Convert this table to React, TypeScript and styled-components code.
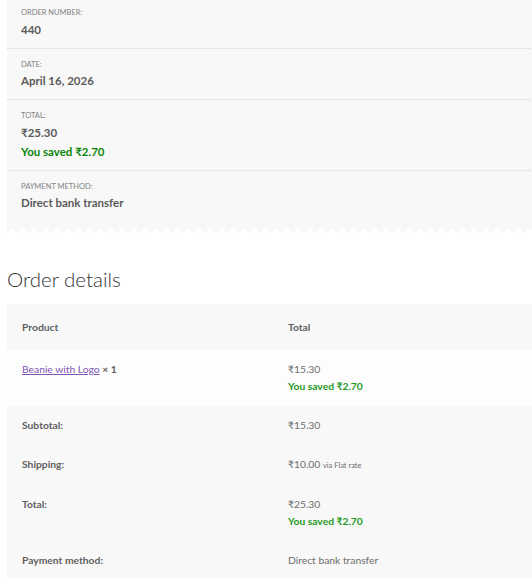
import React from "react";
import styled, { createGlobalStyle } from "styled-components";

const GlobalStyle = createGlobalStyle`
  html, body {
    margin: 0;
    padding: 0;
    overflow: hidden;
    background: #ffffff;
  }
  body {
    font-family: Lato, "Liberation Sans", "DejaVu Sans", sans-serif;
    color: #6d6d6d;
    -webkit-font-smoothing: antialiased;
  }
`;

const Page = styled.div`
  margin-left: 7px;
  width: 532px;
`;

const Overview = styled.div`
  margin-top: -3px;
`;

const OverviewList = styled.ul`
  list-style: none;
  margin: 0;
  padding: 0;
  background: #f8f8f8;
`;

const ZigzagEdge = styled.div`
  height: 5.5px;
  background-image: linear-gradient(135deg, #f8f8f8 25%, transparent 25%),
    linear-gradient(225deg, #f8f8f8 25%, transparent 25%);
  background-size: 11px 11px;
  background-repeat: repeat-x;
`;

const OverviewItem = styled.li<{ $last?: boolean }>`
  padding: 10px 14px ${(p) => (p.$last ? "16px" : "9px")};
  border-bottom: ${(p) => (p.$last ? "none" : "1px dotted #d6d6d6")};
`;

const ItemLabel = styled.span`
  display: block;
  font-size: 7.5px;
  line-height: 11px;
  text-transform: uppercase;
  color: #808080;
`;

const ItemValue = styled.strong`
  display: block;
  margin-top: 1.5px;
  font-size: 11.5px;
  line-height: 19px;
  font-weight: 700;
  color: #5a5a5a;
`;

const SavedLine = styled.strong<{ $compact?: boolean }>`
  display: block;
  font-size: ${(p) => (p.$compact ? "10.3px" : "11.5px")};
  line-height: ${(p) => (p.$compact ? "17px" : "19px")};
  font-weight: 700;
  color: ${(p) => (p.$compact ? "#239a23" : "#0a850a")};
`;

const Heading = styled.h2`
  margin: 32.5px 0 0;
  height: 38px;
  font-size: 20.5px;
  line-height: 26px;
  font-weight: 300;
  color: #333333;
`;

const Table = styled.table`
  width: 532px;
  table-layout: fixed;
  border-collapse: collapse;
  border-spacing: 0;
  font-size: 10.3px;
  line-height: 17px;
`;

const HeadCell = styled.th`
  padding: 14.5px 15px;
  text-align: left;
  font-weight: 700;
  color: #5f5f5f;
  background: #f8f8f8;
`;

const BodyRow = styled.tr<{ $tone: "light" | "grey" }>`
  background: ${(p) => (p.$tone === "light" ? "#fdfdfd" : "#f8f8f8")};
`;

const RowHead = styled.th`
  padding: 11px 15px;
  text-align: left;
  vertical-align: top;
  font-weight: 700;
  color: #5f5f5f;
`;

const Cell = styled.td`
  padding: 11px 15px;
  text-align: left;
  vertical-align: top;
  color: #6d6d6d;
`;

const ProductLink = styled.a`
  color: #7f54b3;
  text-decoration: underline;
`;

const Qty = styled.strong`
  font-weight: 700;
  color: #5f5f5f;
`;

const Amount = styled.span`
  display: block;
`;

const ShippedVia = styled.small`
  font-size: 7.5px;
`;

const overview = [
  { label: "Order number:", value: "440" },
  { label: "Date:", value: "April 16, 2026" },
  { label: "Total:", value: "₹25.30", saved: "You saved ₹2.70" },
  { label: "Payment method:", value: "Direct bank transfer" },
];

export default function App() {
  return (
    <>
      <GlobalStyle />
      <Page>
        <Overview>
          <OverviewList>
            {overview.map((it, i) => (
              <OverviewItem key={it.label} $last={i === overview.length - 1}>
                <ItemLabel>{it.label}</ItemLabel>
                <ItemValue>{it.value}</ItemValue>
                {it.saved && <SavedLine>{it.saved}</SavedLine>}
              </OverviewItem>
            ))}
          </OverviewList>
          <ZigzagEdge />
        </Overview>

        <Heading>Order details</Heading>

        <Table>
          <thead>
            <tr>
              <HeadCell>Product</HeadCell>
              <HeadCell>Total</HeadCell>
            </tr>
          </thead>
          <tbody>
            <BodyRow $tone="light">
              <Cell>
                <ProductLink href="#">Beanie with Logo</ProductLink>{" "}
                <Qty>× 1</Qty>
              </Cell>
              <Cell>
                <Amount>₹15.30</Amount>
                <SavedLine $compact>You saved ₹2.70</SavedLine>
              </Cell>
            </BodyRow>
          </tbody>
          <tfoot>
            <BodyRow $tone="grey">
              <RowHead>Subtotal:</RowHead>
              <Cell>₹15.30</Cell>
            </BodyRow>
            <BodyRow $tone="grey">
              <RowHead>Shipping:</RowHead>
              <Cell>
                ₹10.00 <ShippedVia>via Flat rate</ShippedVia>
              </Cell>
            </BodyRow>
            <BodyRow $tone="grey">
              <RowHead>Total:</RowHead>
              <Cell>
                <Amount>₹25.30</Amount>
                <SavedLine $compact>You saved ₹2.70</SavedLine>
              </Cell>
            </BodyRow>
            <BodyRow $tone="grey">
              <RowHead>Payment method:</RowHead>
              <Cell>Direct bank transfer</Cell>
            </BodyRow>
          </tfoot>
        </Table>
      </Page>
    </>
  );
}
